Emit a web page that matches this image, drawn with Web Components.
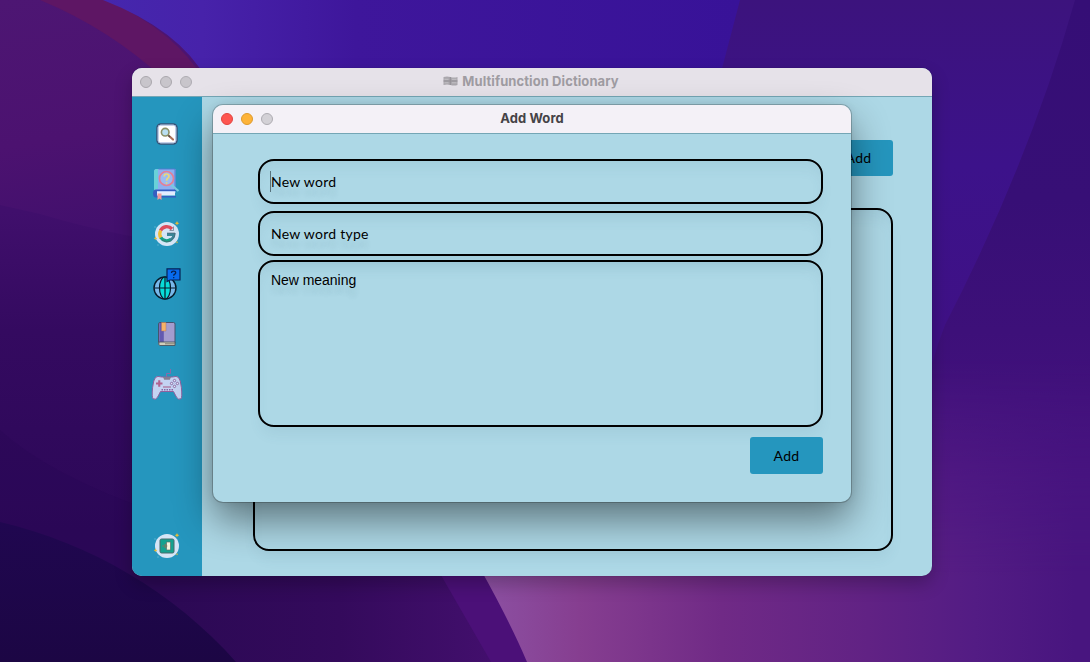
<!DOCTYPE html>
<html lang="en">
<head>
<meta charset="utf-8">
<title>Multifunction Dictionary</title>
<style>
html,body{margin:0;height:100%;overflow:hidden;background:#32105f}
</style>
</head>
<body>
<desk-top>
  <mac-window id="main" class="back" inactive caption="Multifunction Dictionary" flag>
    <dict-main></dict-main>
  </mac-window>
  <mac-window id="dialog" class="front" caption="Add Word">
    <add-word></add-word>
  </mac-window>
</desk-top>

<script>
function define(name, html, setup) {
  customElements.define(name, class extends HTMLElement {
    constructor() {
      super();
      const t = document.createElement('template');
      t.innerHTML = html;
      this.attachShadow({mode: 'open'}).appendChild(t.content.cloneNode(true));
    }
    connectedCallback() { if (setup) setup(this, this.shadowRoot); }
  });
}

define('wall-paper', `
<style>:host{display:block;width:1090px;height:662px}svg{display:block}</style>
<svg width="1090" height="662" viewBox="0 0 1090 662">
  <defs>
    <linearGradient id="left" x1="0" y1="0" x2="0" y2="662" gradientUnits="userSpaceOnUse"><stop offset="0" stop-color="#491064"/><stop offset=".32" stop-color="#400f6c"/><stop offset=".5" stop-color="#340a60"/><stop offset=".8" stop-color="#2c0858"/><stop offset="1" stop-color="#2c0a58"/></linearGradient>
    <linearGradient id="upper" x1="0" y1="0" x2="40" y2="240" gradientUnits="userSpaceOnUse"><stop offset="0" stop-color="#4d1673"/><stop offset=".6" stop-color="#4c1270"/><stop offset="1" stop-color="#42106d"/></linearGradient>
    <linearGradient id="blue" x1="100" y1="0" x2="740" y2="0" gradientUnits="userSpaceOnUse"><stop offset="0" stop-color="#4527ad"/><stop offset=".16" stop-color="#4722aa"/><stop offset=".4" stop-color="#3e169b"/><stop offset="1" stop-color="#381298"/></linearGradient>
    <linearGradient id="right" x1="0" y1="0" x2="0" y2="662" gradientUnits="userSpaceOnUse"><stop offset="0" stop-color="#3c137d"/><stop offset=".25" stop-color="#3c128a"/><stop offset=".5" stop-color="#3f1186"/><stop offset=".7" stop-color="#451280"/><stop offset="1" stop-color="#48157f"/></linearGradient>
    <linearGradient id="edge" x1="0" y1="0" x2="0" y2="662" gradientUnits="userSpaceOnUse"><stop offset="0" stop-color="#350e76"/><stop offset=".3" stop-color="#370f76"/><stop offset=".5" stop-color="#3d1079"/><stop offset=".7" stop-color="#45127f"/><stop offset="1" stop-color="#48157f"/></linearGradient>
    <linearGradient id="pink" x1="485" y1="0" x2="1075" y2="0" gradientUnits="userSpaceOnUse"><stop offset="0" stop-color="#8c50a2"/><stop offset=".16" stop-color="#863e90"/><stop offset=".4" stop-color="#702a86"/><stop offset=".65" stop-color="#612284"/><stop offset=".83" stop-color="#531c84"/><stop offset="1" stop-color="#48157f"/></linearGradient>
    <linearGradient id="fade" x1="0" y1="360" x2="0" y2="576" gradientUnits="userSpaceOnUse"><stop offset="0" stop-color="#000"/><stop offset="1" stop-color="#fff"/></linearGradient>
    <mask id="rise" maskUnits="userSpaceOnUse" x="0" y="0" width="1090" height="662"><rect width="1090" height="662" fill="url(#fade)"/></mask>
    <linearGradient id="bottom" x1="160" y1="0" x2="520" y2="0" gradientUnits="userSpaceOnUse"><stop offset="0" stop-color="#2b0954"/><stop offset=".5" stop-color="#340a5c"/><stop offset="1" stop-color="#451070"/></linearGradient>
    <linearGradient id="navy" x1="0" y1="520" x2="0" y2="662" gradientUnits="userSpaceOnUse"><stop offset="0" stop-color="#200750"/><stop offset="1" stop-color="#1c0644"/></linearGradient>
  </defs>
  <rect width="1090" height="662" fill="url(#left)"/>
  <path d="M0 0H220V250Q120 238 40 214L0 205Z" fill="url(#upper)"/>
  <path d="M0 430Q50 475 150 510V662H0Z" fill="#230650" opacity=".2"/>
  <path d="M40 0H108Q177 33 204 80H165Q110 29 40 0Z" fill="#5e1664"/>
  <path d="M103 0H745L720 80H207Q180 30 103 0Z" fill="url(#blue)"/>
  <path d="M740 0H1090V662H880V80H719Z" fill="url(#right)"/>
  <path d="M1075 0H1090V662H900Q900 440 945 325Q1030 160 1075 0Z" fill="url(#edge)"/>
  <path d="M120 560H500L540 662H120Z" fill="url(#bottom)"/>
  <path d="M438 570H490L530 662H491Z" fill="#4b1078"/>
  <path d="M481 570H800V330H1090V662H527Q510 622 481 570Z" fill="url(#pink)" mask="url(#rise)"/>
  <path d="M0 522C90 543 174 592 236 662H0Z" fill="url(#navy)"/>
</svg>`);

define('desk-top', `
<style>
:host{display:block;position:relative;width:1090px;height:662px;overflow:hidden;font-family:"Liberation Sans",Arial,sans-serif}
::slotted(.back){position:absolute;left:132px;top:68px;width:800px;height:508px}
::slotted(.front){position:absolute;left:213px;top:105px;width:638px;height:397px}
</style>
<wall-paper></wall-paper><slot></slot>`);

define('mac-window', `
<style>
:host{display:flex;flex-direction:column;border-radius:10px;overflow:hidden;background:#add8e6;box-shadow:0 0 0 1px rgba(0,0,0,.2),0 18px 38px rgba(0,0,0,.46),0 0 10px rgba(0,0,0,.08);--bar:#f4f1f7;--ink:#454346;--c1:#fe5650;--c2:#fdb339;--c3:#d3d1d6;--e1:#e1443f;--e2:#dd9a2d}
:host([inactive]){box-shadow:0 0 1px rgba(0,0,0,.4),0 8px 18px rgba(0,0,0,.24);--bar:#e6e2e9;--ink:#9f9ca2;--c1:#c8c5cb;--c2:#c8c5cb;--c3:#c8c5cb;--e1:#aaa7ad;--e2:#aaa7ad}
header{display:grid;grid-template-columns:80px 1fr 80px;align-items:center;height:28px;flex:none;background:var(--bar);border-bottom:1px solid #74a6b5}
.dots{display:flex;gap:8px;padding-left:8px}
i{width:12px;height:12px;border-radius:50%;box-sizing:border-box;background:var(--c1);border:1px solid var(--e1)}
i:nth-child(2){background:var(--c2);border-color:var(--e2)}
i:nth-child(3){background:var(--c3);border-color:#aeacb2}
.title{display:flex;justify-content:center;align-items:center;gap:4px;font:700 13px/16px Inter,sans-serif;color:var(--ink);white-space:nowrap;padding-bottom:2px}
.title svg{display:none}
:host([flag]) .title{padding-right:2px}
:host([flag]) .title svg{display:block}
main{flex:1;display:flex;min-height:0}
</style>
<header><div class="dots"><i></i><i></i><i></i></div>
<div class="title"><svg width="15" height="10" viewBox="0 0 15 10"><path d="M.5 1Q4 0 7.500 1T14.500 1V9Q11 10 7.500 9T.5 9Z" fill="#aaa7ad"/><path d="M1.500 3.300h4M9 3.300h4.500M1.500 6.800h4M9 6.800h4.500" stroke="#c9c6cc" stroke-width=".8"/><path d="M.5 5h14M7.300 1v8" stroke="#949197"/></svg><span></span></div><b></b></header>
<main><slot></slot></main>`, (el, r) => {
  const s = r.querySelector('.title span');
  s.textContent = el.getAttribute('caption');
  s.style.letterSpacing = el.hasAttribute('flag') ? '.08px' : '.1px';
});

define('comic-text', `
<style>:host{display:inline-block;font:400 14px/20px Lato,"Open Sans",sans-serif;color:#000;letter-spacing:.26px;white-space:nowrap}</style><slot></slot>`);

define('add-button', `
<style>:host{display:flex;align-items:center;justify-content:center;box-sizing:border-box;background:#2596be;border-radius:3px}</style>
<comic-text><slot></slot></comic-text>`);

define('outline-field', `
<style>
:host{display:flex;align-items:center;box-sizing:border-box;border:2px solid #000;border-radius:16px;padding:0 11px;box-shadow:inset 0 10px 14px -4px rgba(70,110,130,.09),0 10px 14px -4px rgba(70,110,130,.1);text-shadow:0 9px 5px rgba(50,90,110,.11)}
:host([area]){align-items:flex-start;padding-top:10px;font:14px/16px "Liberation Sans",Arial,sans-serif;color:#000}
</style><slot></slot>`);

define('add-word', `
<style>
:host{flex:1;display:flex;flex-direction:column;padding:25px 28px 28px 45px}
outline-field{height:45px;flex:none}
.a{margin-bottom:7px}.b{margin-bottom:4px}.c{height:167px;margin-bottom:10px}
add-button{width:73px;height:37px;align-self:flex-end}
.caret{width:1px;height:21px;background:#59737d;margin-left:-1px}
.c span{letter-spacing:-.04px}
</style>
<outline-field class="a"><span class="caret"></span><comic-text>New word</comic-text></outline-field>
<outline-field class="b"><comic-text>New word type</comic-text></outline-field>
<outline-field class="c" area><span>New meaning</span></outline-field>
<add-button>Add</add-button>`);

const sparkles = '<path d="M26 3l.7 1.500 1.600.7-1.600.7L26 7.500l-.7-1.600-1.600-.7 1.600-.7ZM4.500 18.500l.6 1.200 1.300.6-1.300.6-.6 1.200-.6-1.200-1.200-.6 1.200-.6ZM26 23l.4.8.8.4-.8.4-.4.8-.4-.8-.8-.4.8-.4Z" fill="#e9bd35"/><circle cx="4" cy="9" r=".7" fill="#66b6d2"/><circle cx="7" cy="27" r=".7" fill="#66b6d2"/>';
const icons = {
search: `<rect x="6" y="6" width="20" height="20" rx="3.800" fill="#fff" stroke="#365579" stroke-width="1.500"/><rect x="7.200" y="7.200" width="17.600" height="17.600" rx="2.500" fill="none" stroke="#a8bbe0" stroke-width="1"/><path d="M17.500 17.500l4.500 4" stroke="#ad7259" stroke-width="2.200" stroke-linecap="round"/><path d="M17 17l2 2" stroke="#554e4c" stroke-width="1.500"/><circle cx="14.200" cy="14.200" r="3.800" fill="#b9dff1" stroke="#8c9168" stroke-width="1.600"/>`,
book: `<path d="M3.500 2.500Q3.500 1 5 1H24.500V25H3.500Z" fill="#8db0f0"/><path d="M7.500 1H24V22" fill="none" stroke="#5378d0" stroke-width=".9"/><path d="M3 3q0-2 4-2V21q-4 0-4 3Z" fill="#69d2d9"/><path d="M5 21.500H25V23H6v5h19v1.500H5q-3 0-3-4t3-4Z" fill="#355fc1"/><path d="M6 23.500h18v4H6Z" fill="#e3edff"/><path d="M6.500 25.500h4v6.500l-2-1.600-2 1.600Z" fill="#f19a9d"/><path d="M20 16.500l7.500 6.500" stroke="#77cce0" stroke-width="2.200"/><circle cx="15.500" cy="10.500" r="7" fill="#9bbcf2" stroke="#e38097" stroke-width="1.700"/><path d="M13.200 8.500q0-2.500 2.300-2.500T18 8.300q0 1.200-1.200 2t-1.200 2.500m0 1.500v1.400" fill="none" stroke="#ebd77a" stroke-width="1.700"/>`,
google: `<circle cx="16" cy="16" r="12" fill="#d5e5f6"/>${sparkles}<path d="M9.500 12.500A7 7 0 0 1 21 11" fill="none" stroke="#dc4c5d" stroke-width="3.400"/><path d="M9.700 12.500A7 7 0 0 0 10 20" fill="none" stroke="#f0bf38" stroke-width="3.300"/><path d="M9.800 19.500A7 7 0 0 0 20 21.400" fill="none" stroke="#16a085" stroke-width="3.300"/><path d="M19.500 22A7 7 0 0 0 23 16.500H16" fill="none" stroke="#3d8799" stroke-width="2.800"/><path d="M22.500 8.500v4h-4M16 15h8q.5 4-3.500 7M11 22q4 3 9 1" fill="none" stroke="#565c6e" stroke-width=".6"/>`,
globe: `<circle cx="14" cy="20" r="11" fill="#79b9eb" stroke="#071c2b" stroke-width="1.400"/><ellipse cx="14" cy="20" rx="5.500" ry="11" fill="#08dcd8" stroke="#071c2b" stroke-width="1.200"/><path d="M14 9v22M3 20h22" stroke="#071c2b" stroke-width="1.200"/><path d="M16 .8H29V12H19L16 13.500Z" fill="#086cf0" stroke="#062254" stroke-width="1.200"/><path d="M20.500 4.900q0-1.700 2.100-1.700t2.100 1.500q0 1-1 1.500t-1 1.500m0 1.300v1.200" fill="none" stroke="#082457" stroke-width="1.300"/>`,
note: `<rect x="7.500" y="4.500" width="16.500" height="21.500" rx="1.500" fill="#a49dcf" stroke="#46536e"/><path d="M8.300 5h4.500v19.500H8.300Z" fill="#625ab0"/><path d="M8 24h16v3.500H9Q7 27.500 8 24Z" fill="#d3cfbc" stroke="#4b5661" stroke-width=".9"/><path d="M14 25.800h10" stroke="#77766c" stroke-width=".9"/><path d="M10.500 4.500h4.500V13h-4.500Z" fill="#f7b368" stroke="#a67a67" stroke-width=".5"/>`,
game: `<g transform="translate(0 3.500)"><path d="M15.500 6V2h4v-4.500" fill="none" stroke="#9665a5" stroke-width=".9"/><path d="M4.500 6q2-2 6-.5h11Q25.500 4 27.500 6q2 2 2.900 10 1 10-.5 11.300-2.500 1.500-4.500-1.800L22.500 20H9.500L6.700 25.500q-2 3.300-4.500 1.800Q.6 26 1.600 16 2.500 8 4.500 6Z" fill="#c4d3f2" stroke="#90619e" stroke-width="1"/><path d="M12 5.500h8l-1.200 2.800h-5.600Z" fill="#827f92"/><path d="M5 12h6.500M8.250 8.800v6.400" stroke="#b2638f" stroke-width="2.100"/><path d="M12 15.500h8" stroke="#aa638e" stroke-width="1.100"/><path d="M10.500 18.200h12" stroke="#8765a1" stroke-width="1.500" stroke-dasharray="1.500 1"/><g fill="#e5e9f9" stroke="#83629e" stroke-width=".9"><circle cx="23.500" cy="9.100" r="1.200"/><circle cx="23.500" cy="14.900" r="1.200"/><circle cx="20.600" cy="12" r="1.200"/><circle cx="26.400" cy="12" r="1.200"/></g></g>`,
exit: `<circle cx="16" cy="16" r="12" fill="#d5e5f6"/>${sparkles}<rect x="9" y="9" width="14" height="14" rx="1.500" fill="#14a28f" stroke="#496b6d"/><path d="M15.500 12h4v8h-4Z" fill="#f5f4dd" stroke="#59706b" stroke-width=".7"/><path d="M11 16h4.500m-1.800-2l2 2-2 2" fill="none" stroke="#747d68" stroke-width="1.200"/>`
};
define('side-icon', `<style>:host{display:block;width:32px;height:32px}svg{display:block;overflow:visible}</style><svg width="32" height="32" viewBox="0 0 32 32"></svg>`,
  (el, r) => { r.querySelector('svg').innerHTML = icons[el.getAttribute('name')]; });

define('side-bar', `
<style>
:host{display:flex;flex-direction:column;align-items:center;box-sizing:border-box;width:70px;background:#2596be;padding:21px 0 14px;gap:18px}
side-icon:last-child{margin-top:auto}
</style>
<side-icon name="search"></side-icon><side-icon name="book"></side-icon><side-icon name="google"></side-icon><side-icon name="globe"></side-icon><side-icon name="note"></side-icon><side-icon name="game"></side-icon><side-icon name="exit"></side-icon>`);

define('dict-main', `
<style>
:host{flex:1;display:flex}
section{flex:1;display:flex;flex-direction:column;padding:43px 39px 25px 51px}
add-button{align-self:flex-end;width:69px;height:36px;margin-bottom:32px}
outline-field{flex:1}
</style>
<side-bar></side-bar><section><add-button>Add</add-button><outline-field></outline-field></section>`);
</script>
</body>
</html>
